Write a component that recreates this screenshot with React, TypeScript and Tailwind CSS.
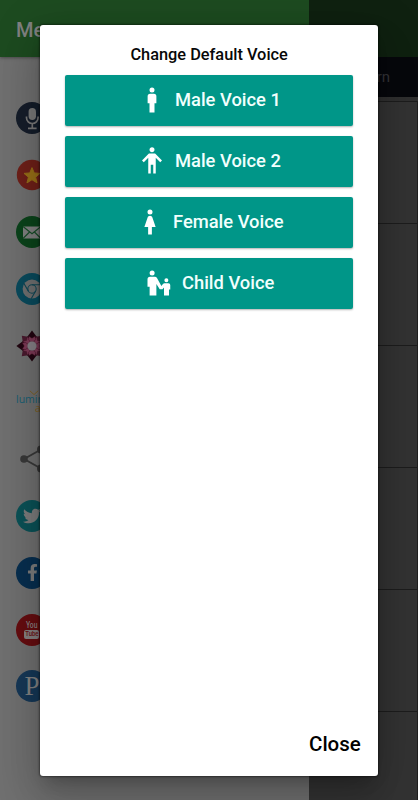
import React from "react";
import { FaTwitter, FaFacebookF } from "react-icons/fa";

const FONT = "font-['Roboto','Liberation_Sans',sans-serif]";

const MALE =
  "M12,2A2,2 0 0,1 14,4A2,2 0 0,1 12,6A2,2 0 0,1 10,4A2,2 0 0,1 12,2M10.5,7H13.5A2,2 0 0,1 15.5,9V14.5H14V22H10V14.5H8.5V9A2,2 0 0,1 10.5,7Z";
const HANDS_DOWN =
  "M12,1C10.89,1 10,1.9 10,3C10,4.11 10.89,5 12,5C13.11,5 14,4.11 14,3A2,2 0 0,0 12,1M10,6C9.73,6 9.5,6.11 9.31,6.28H9.3L4,11.59L5.42,13L9,9.41V22H11V15H13V22H15V9.41L18.58,13L20,11.59L14.7,6.28C14.5,6.11 14.27,6 14,6";
const FEMALE =
  "M12,2A2,2 0 0,1 14,4A2,2 0 0,1 12,6A2,2 0 0,1 10,4A2,2 0 0,1 12,2M10.5,22V16H7.5L10.09,8.41C10.34,7.59 11.1,7 12,7C12.9,7 13.66,7.59 13.91,8.41L16.5,16H13.5V22H10.5Z";
const CHILD =
  "M6.5 2a2 2 0 1 1 0 4 2 2 0 0 1 0-4zM17.9 8.2a1.6 1.6 0 1 1 0 3.2 1.6 1.6 0 0 1 0-3.2zM4.8 7H8.6Q9.8 7 10.4 8L13.9 14.4 15 12.9Q15.6 12.1 16.5 12.1H19.5Q21 12.1 21 13.6V17.2H20V22H16V15.6L14.8 17H12.6L9.9 12.8V22H4.5V15H2.8V9Q2.8 7 4.8 7Z";

type Voice = { label: string; path: string; pad: string };

const VOICES: Voice[] = [
  { label: "Male Voice 1", path: MALE, pad: "pl-[72px]" },
  { label: "Male Voice 2", path: HANDS_DOWN, pad: "pl-[72px]" },
  { label: "Female Voice", path: FEMALE, pad: "pl-[70px]" },
  { label: "Child Voice", path: CHILD, pad: "pl-[79px]" },
];

function Disc({ color, children }: { color: string; children: React.ReactNode }) {
  return (
    <span className={`flex h-8 w-8 items-center justify-center overflow-hidden rounded-full ${color}`}>
      {children}
    </span>
  );
}

function Mic() {
  return (
    <svg viewBox="0 0 32 32" className="h-8 w-8" fill="none" stroke="#787878" strokeWidth="1.7">
      <rect x="12.6" y="6" width="7.4" height="12" rx="3.7" fill="#787878" stroke="none" />
      <path d="M10.5 14.5v1.2a5.8 5.8 0 0 0 11.6 0v-1.2M16.3 21.5v4M12 26.3h8.6" />
    </svg>
  );
}

function Star() {
  return (
    <svg viewBox="0 0 32 32" className="h-8 w-8">
      <path d="M16 8.2l2.4 5.6 6 .5-4.6 4 1.5 6-5.3-3.3-5.3 3.3 1.5-6-4.6-4 6-.5z" fill="#987018" stroke="#987018" />
    </svg>
  );
}

function Mail() {
  return (
    <svg viewBox="0 0 32 32" className="h-8 w-8">
      <path d="M7 10.5h18v12H7z" fill="#808080" />
      <path d="M7 10.5l9 7.3 9-7.3M7 22.5l6.6-6.5M25 22.5L18.4 16" fill="none" stroke="#174c27" strokeWidth="1.1" />
    </svg>
  );
}

function Browser() {
  return (
    <svg viewBox="0 0 32 32" className="h-8 w-8" fill="none" stroke="#114756" strokeWidth="1.1">
      <circle cx="16" cy="16" r="9.4" fill="#707070" stroke="none" />
      <circle cx="16" cy="16" r="4.2" />
      <path d="M16 11.8h9M12.4 18.1L7.8 10.2M19.6 18.1L15.2 25.8" />
    </svg>
  );
}

const PETALS = [45, 135, 225, 315, 0, 90, 180, 270];

function Flower() {
  return (
    <svg viewBox="0 0 32 32" className="h-8 w-8">
      {PETALS.map((a) => (
        <g key={a} transform={`rotate(${a} 16 16)`}>
          <path
            d={a % 90 === 0 ? "M16 0.4l4.7 6.4L16 12l-4.7-5.2z" : "M16 1.6l3.8 5.2L16 12l-3.8-5.2z"}
            fill={a % 90 === 0 ? "#220611" : "#4a1a2e"}
          />
          <path d="M12.8 6.2l3.2 2 3.2-2 .3 3.8-3.5 2.4-3.5-2.4z" fill="#7c3a56" stroke="#431024" strokeWidth=".4" />
        </g>
      ))}
      <circle cx="16" cy="16" r="4.6" fill="#858085" />
    </svg>
  );
}

function Luminous() {
  return (
    <span className="flex h-8 w-8 flex-col whitespace-nowrap font-['Open_Sans','Noto_Sans',sans-serif]">
      <svg viewBox="0 0 12 6" className="ml-3 mt-[4px] h-[5px] w-3 shrink-0" fill="none" stroke="#80601c">
        <path d="M1 1l5 4.5L11 1" />
      </svg>
      <span className="text-[10.5px] leading-[8px] text-[#175f74]">luminous</span>
      <span className="ml-[19px] text-[10.5px] leading-[10px] text-[#80601c]">apps</span>
    </span>
  );
}

function Share() {
  return (
    <svg viewBox="0 0 32 32" className="h-8 w-8" fill="#393939" stroke="#393939">
      <path d="M8 16L25 6.5M8 16l17 9.5" strokeWidth="2" fill="none" />
      <circle cx="8" cy="16" r="3.8" stroke="none" />
      <circle cx="25" cy="6.5" r="4" stroke="none" />
      <circle cx="25" cy="25.5" r="4" stroke="none" />
    </svg>
  );
}

function YouTube() {
  return (
    <span className="flex flex-col items-center font-['Roboto',sans-serif] text-[#858080]">
      <span className="scale-x-75 text-[9px] font-medium leading-[9px]">You</span>
      <span className="flex h-[9px] w-[15px] items-center justify-center rounded-[2px] bg-[#858080] text-[#6b1113]">
        <span className="scale-x-75 text-[8px] font-medium leading-[8px]">Tube</span>
      </span>
    </span>
  );
}

const DRAWER_ITEMS: { name: string; icon: React.ReactNode }[] = [
  { name: "mic", icon: <Disc color="bg-[#151d2a]"><Mic /></Disc> },
  { name: "rate", icon: <Disc color="bg-[#6f2019] scale-95"><Star /></Disc> },
  { name: "mail", icon: <Disc color="bg-[#0b441b]"><Mail /></Disc> },
  { name: "web", icon: <Disc color="bg-[#0a4b5d]"><Browser /></Disc> },
  { name: "flower", icon: <Flower /> },
  { name: "luminous", icon: <Luminous /> },
  { name: "share", icon: <Share /> },
  { name: "twitter", icon: <Disc color="bg-[#0b5257]"><FaTwitter className="h-[18px] w-[18px] text-[#7c7c7c]" /></Disc> },
  { name: "facebook", icon: <Disc color="bg-[#082f50]"><FaFacebookF className="h-[17px] w-[17px] text-[#7c7c7c]" /></Disc> },
  { name: "youtube", icon: <Disc color="bg-[#660d10]"><YouTube /></Disc> },
  {
    name: "pandora",
    icon: (
      <Disc color="bg-[#163857]">
        <span className="font-['Liberation_Serif',serif] text-[27px] leading-8 text-[#818181]">P</span>
      </Disc>
    ),
  },
];

const CELLS = [0, 1, 2, 3, 4, 5];

export default function App() {
  return (
    <div className={`relative flex h-[800px] w-[418px] overflow-hidden bg-[#333333] ${FONT}`}>
      <aside className="flex w-[309px] shrink-0 flex-col bg-[#707070]">
        <header className="flex h-[57px] shrink-0 items-center bg-[#1d4b20] pl-4 pt-[2px] text-[20px] font-medium text-[#818181] shadow-[0_1px_3px_rgba(0,0,0,0.35)]">
          Menu
        </header>
        <nav className="flex flex-col pl-4 pt-[33px]">
          {DRAWER_ITEMS.map((item) => (
            <div key={item.name} className="flex h-[56.8px] items-center">
              {item.icon}
            </div>
          ))}
        </nav>
      </aside>

      <main className="flex w-[109px] flex-col">
        <div className="h-[57px] shrink-0 bg-[#0f2110]" />
        <div className="flex h-10 shrink-0 items-center justify-end bg-[#07080c] pr-[28px] text-[15px] text-[#343438]">
          Learn
        </div>
        <div className="h-[4px] shrink-0 bg-[#303030]" />
        <div className="flex flex-col border-r border-[#1f1f1f]">
          {CELLS.map((c) => (
            <div key={c} className="h-[122px] shrink-0 border-t border-[#1d1d1d] bg-[#333333]" />
          ))}
        </div>
      </main>

      <section className="absolute left-[40.3px] top-[24.5px] flex h-[751px] w-[337.7px] flex-col rounded-[3px] bg-white px-[24.7px] shadow-[0_11px_15px_-7px_rgba(0,0,0,0.2),0_24px_38px_3px_rgba(0,0,0,0.14),0_9px_46px_8px_rgba(0,0,0,0.12),0_0_2px_1px_rgba(0,0,0,0.4)]">
        <h1 className="whitespace-nowrap pt-[20.5px] text-center text-[16.35px] font-medium leading-[19px] text-[#080808]">
          Change Default Voice
        </h1>
        <div className="mt-[10.5px] flex flex-col gap-[10px]">
          {VOICES.map((v) => (
            <button
              key={v.label}
              className={`flex h-[51px] w-[288px] items-center gap-2 rounded-[2px] bg-[#009688] text-[18.35px] font-medium text-[#f1fffd] shadow-[0_1px_2px_rgba(0,0,0,0.3)] ${v.pad}`}
            >
              <svg viewBox="0 0 24 24" className="h-[30px] w-[30px] shrink-0" fill="#ffffff">
                <path d={v.path} />
              </svg>
              <span className="whitespace-nowrap">{v.label}</span>
            </button>
          ))}
        </div>
        <button className="-mr-[7.5px] mb-[19.5px] mt-auto self-end text-[20.5px] font-medium leading-6 text-black">
          Close
        </button>
      </section>
    </div>
  );
}
